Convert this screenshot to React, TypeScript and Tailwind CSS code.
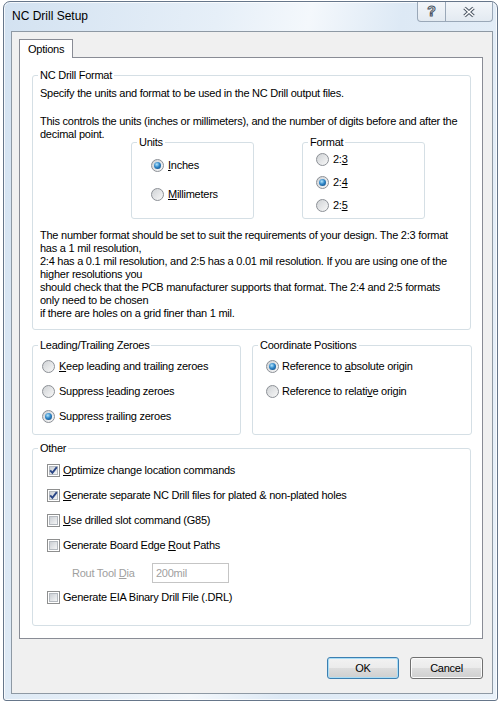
import React from "react";

const ui = "font-['Liberation_Sans',Arial,sans-serif] text-[11px] leading-[13px] tracking-[-0.25px] text-black";

function Radio({ checked }: { checked?: boolean }) {
  return (
    <span className="flex h-[13px] w-[13px] shrink-0 items-center justify-center rounded-full border border-[#8c9096] bg-[linear-gradient(135deg,#cfd2d5,#f8f8f8)]">
      {checked && (
        <span className="h-[7px] w-[7px] rounded-full bg-[radial-gradient(circle_at_40%_35%,#b4e6fc_0%,#2f86c8_45%,#0b3d70_100%)]" />
      )}
    </span>
  );
}

function Check({ checked }: { checked?: boolean }) {
  return (
    <span className="relative flex h-[13px] w-[13px] shrink-0 items-center justify-center border border-[#8e8f8f] bg-white">
      <span className="h-[9px] w-[9px] border border-[#b4b9bf] bg-[linear-gradient(135deg,#cbcfd4,#f4f5f6)]" />
      {checked && (
        <svg className="absolute left-0 top-0" width="11" height="11" viewBox="0 0 11 11">
          <path d="M2.2 5.4 L4.4 7.8 L8.8 2.2" fill="none" stroke="#2a4686" strokeWidth="1.9" />
        </svg>
      )}
    </span>
  );
}

function Opt({ checked, children, gap = "gap-[4px]" }: { checked?: boolean; children: React.ReactNode; gap?: string }) {
  return (
    <div className={`flex h-[13px] items-center ${gap}`}>
      <Radio checked={checked} />
      <span className="whitespace-nowrap">{children}</span>
    </div>
  );
}

function Box({ checked, children }: { checked?: boolean; children: React.ReactNode }) {
  return (
    <div className="flex h-[13px] items-center gap-[3px]">
      <Check checked={checked} />
      <span className="whitespace-nowrap">{children}</span>
    </div>
  );
}

function Group({ title, className, children }: { title: string; className: string; children: React.ReactNode }) {
  return (
    <fieldset className={`min-w-0 rounded-[3px] border border-[#d5dfe5] ${className}`}>
      <legend className="ml-[5px] px-[2px] leading-[13px]">{title}</legend>
      {children}
    </fieldset>
  );
}

function Btn({ label, primary }: { label: string; primary?: boolean }) {
  return (
    <button
      className={`h-[22px] rounded-[3px] border bg-[linear-gradient(#f2f2f2_0%,#ebebeb_50%,#dddddd_50%,#cfcfcf_100%)] ${
        primary
          ? "w-[72px] border-[#3c7fb1] shadow-[inset_0_0_0_1px_#a9ddf6]"
          : "w-[73px] border-[#707070] shadow-[inset_0_0_0_1px_#fbfbfb]"
      }`}
    >
      {label}
    </button>
  );
}

export default function App() {
  return (
    <div className={`h-[704px] w-[500px] overflow-hidden bg-white pl-[3px] pt-px ${ui}`}>
      <div className="flex h-[700px] w-[495px] flex-col rounded-t-[7px] rounded-b-[3px] border border-[#66768a] bg-[linear-gradient(100deg,#d3e2f1_0%,#e6eff8_35%,#f4f8fc_50%,#dde9f5_65%,#e9f1f9_100%)] shadow-[inset_0_0_0_1px_rgba(255,255,255,0.75)]">
        {/* title bar */}
        <div className="flex h-[29px] items-start justify-between">
          <div className="pl-[8px] pt-[6px] text-[12px] leading-[16px] tracking-normal">NC Drill Setup</div>
          <div className="mr-[4px] flex h-[20px]">
            <div className="flex w-[29px] items-center justify-center rounded-bl-[4px] border border-t-0 border-[#9aa8b8] bg-[linear-gradient(#f3f6fa,#e3eaf1)] text-[14px] font-bold text-white [-webkit-text-stroke:1px_#4a5563]">
              ?
            </div>
            <div className="flex w-[47px] items-center justify-center rounded-br-[4px] border border-l-0 border-t-0 border-[#9aa8b8] bg-[linear-gradient(#f3f6fa,#e3eaf1)]">
              <svg width="14" height="12" viewBox="0 0 14 12">
                <path d="M2.5 2 L11.5 10 M11.5 2 L2.5 10" stroke="#4a5563" strokeWidth="3.6" />
                <path d="M2.5 2 L11.5 10 M11.5 2 L2.5 10" stroke="#ffffff" strokeWidth="1.6" />
              </svg>
            </div>
          </div>
        </div>

        {/* client area */}
        <div className="ml-[7px] flex h-[663px] w-[482px] flex-col border border-[#8e99a4] bg-[#f0f0f0]">
          <div className="relative z-10 -mb-px ml-[7px] mt-[7px] h-[19px] w-[54px] border border-b-0 border-[#898c95] bg-white pl-[8px] leading-[18px]">
            Options
          </div>
          <div className="ml-[7px] h-[582px] w-[464px] border border-[#898c95] bg-white">
            {/* NC Drill Format */}
            <Group title="NC Drill Format" className="ml-[12px] mt-[11px] w-[439px]">
              <div className="px-[7px] pb-[9px] pt-[5px]">
                <p className="whitespace-nowrap">Specify the units and format to be used in the NC Drill output files.</p>
                <p className="mt-[15px] whitespace-nowrap">
                  This controls the units (inches or millimeters), and the number of digits before and after the
                  <br />
                  decimal point.
                </p>
                <div className="-mt-[5px] flex">
                  <Group title="Units" className="ml-[91px] h-[83px] w-[123px]">
                    <div className="flex flex-col gap-[16px] pl-[19px] pt-[10px]">
                      <Opt checked>
                        <u>I</u>nches
                      </Opt>
                      <Opt>
                        <u>M</u>illimeters
                      </Opt>
                    </div>
                  </Group>
                  <Group title="Format" className="ml-[48px] h-[83px] w-[123px]">
                    <div className="flex flex-col gap-[10px] pl-[13px] pt-[4px]">
                      <Opt>
                        2:<u>3</u>
                      </Opt>
                      <Opt checked>
                        2:<u>4</u>
                      </Opt>
                      <Opt>
                        2:<u>5</u>
                      </Opt>
                    </div>
                  </Group>
                </div>
                <p className="mt-[10px] whitespace-nowrap">
                  The number format should be set to suit the requirements of your design. The 2:3 format
                  <br />
                  has a 1 mil resolution,
                  <br />
                  2:4 has a 0.1 mil resolution, and 2:5 has a 0.01 mil resolution. If you are using one of the
                  <br />
                  higher resolutions you
                  <br />
                  should check that the PCB manufacturer supports that format. The 2:4 and 2:5 formats
                  <br />
                  only need to be chosen
                  <br />
                  if there are holes on a grid finer than 1 mil.
                </p>
              </div>
            </Group>

            <div className="ml-[12px] mt-[9px] flex gap-[11px]">
              <Group title="Leading/Trailing Zeroes" className="h-[96px] w-[209px]">
                <div className="flex flex-col gap-[12px] pl-[9px] pt-[8px]">
                  <Opt>
                    <u>K</u>eep leading and trailing zeroes
                  </Opt>
                  <Opt>
                    Suppress <u>l</u>eading zeroes
                  </Opt>
                  <Opt checked>
                    Suppress <u>t</u>railing zeroes
                  </Opt>
                </div>
              </Group>
              <Group title="Coordinate Positions" className="h-[96px] w-[220px]">
                <div className="flex flex-col gap-[12px] pl-[13px] pt-[8px]">
                  <Opt checked gap="gap-[3px]">
                    Reference to <u>a</u>bsolute origin
                  </Opt>
                  <Opt gap="gap-[3px]">
                    Reference to relati<u>v</u>e origin
                  </Opt>
                </div>
              </Group>
            </div>

            <Group title="Other" className="ml-[12px] mt-[7px] h-[184px] w-[439px]">
              <div className="flex flex-col pl-[14px] pt-[9px]">
                <div className="flex flex-col gap-[12px]">
                  <Box checked>
                    <u>O</u>ptimize change location commands
                  </Box>
                  <Box checked>
                    <u>G</u>enerate separate NC Drill files for plated &amp; non-plated holes
                  </Box>
                  <Box>
                    <u>U</u>se drilled slot command (G85)
                  </Box>
                  <Box>
                    Generate Board Edge <u>R</u>out Paths
                  </Box>
                </div>
                <div className="mt-[11px] flex h-[20px] items-center pl-[25px]">
                  <span className="w-[80px] text-[#a0a0a0]">
                    Rout Tool <u>D</u>ia
                  </span>
                  <div className="flex h-[20px] w-[77px] items-center border border-[#c5c5c5] bg-white pl-[3px] text-[#a0a0a0]">
                    200mil
                  </div>
                </div>
                <div className="mt-[8px]">
                  <Box>Generate EIA Binary Drill File (.DRL)</Box>
                </div>
              </div>
            </Group>
          </div>

          <div className="mr-[9px] mt-[18px] flex justify-end gap-[11px]">
            <Btn label="OK" primary />
            <Btn label="Cancel" />
          </div>
        </div>
      </div>
    </div>
  );
}
